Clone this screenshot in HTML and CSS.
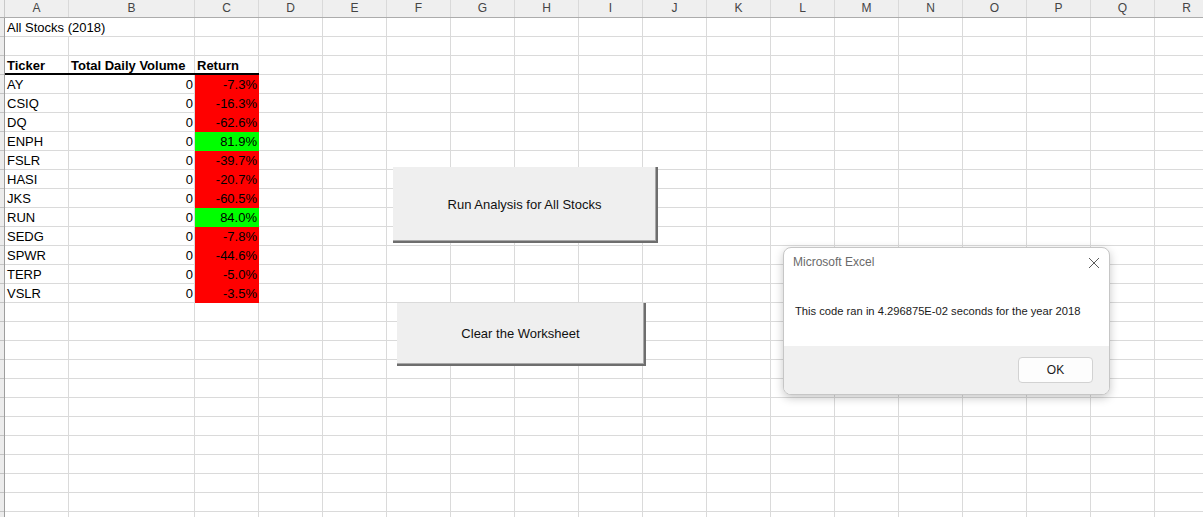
FILE: index.html
```html
<!DOCTYPE html>
<html>
<head>
<meta charset="utf-8">
<title>All Stocks (2018)</title>
<link rel="stylesheet" href="styles.css">
</head>
<body>
<div class="sheet">
  <div class="colheads">
    <div class="corner"></div>
    <div class="ch">A</div>
    <div class="ch ch-wide">B</div>
    <div class="ch">C</div>
    <div class="ch">D</div>
    <div class="ch">E</div>
    <div class="ch">F</div>
    <div class="ch">G</div>
    <div class="ch">H</div>
    <div class="ch">I</div>
    <div class="ch">J</div>
    <div class="ch">K</div>
    <div class="ch">L</div>
    <div class="ch">M</div>
    <div class="ch">N</div>
    <div class="ch">O</div>
    <div class="ch">P</div>
    <div class="ch">Q</div>
    <div class="ch">R</div>
  </div>
  <div class="body">
    <div class="rowheads"></div>
    <div class="grid">
      <div class="cells">
        <div class="c title">All Stocks (2018)</div>
        <div class="c blank"></div>
        <div class="c hdr">Ticker</div>
        <div class="c hdr">Total Daily Volume</div>
        <div class="c hdr">Return</div>

        <div class="c">AY</div><div class="c num">0</div><div class="c num neg">-7.3%</div>
        <div class="c">CSIQ</div><div class="c num">0</div><div class="c num neg">-16.3%</div>
        <div class="c">DQ</div><div class="c num">0</div><div class="c num neg">-62.6%</div>
        <div class="c">ENPH</div><div class="c num">0</div><div class="c num pos">81.9%</div>
        <div class="c">FSLR</div><div class="c num">0</div><div class="c num neg">-39.7%</div>
        <div class="c">HASI</div><div class="c num">0</div><div class="c num neg">-20.7%</div>
        <div class="c">JKS</div><div class="c num">0</div><div class="c num neg">-60.5%</div>
        <div class="c">RUN</div><div class="c num">0</div><div class="c num pos">84.0%</div>
        <div class="c">SEDG</div><div class="c num">0</div><div class="c num neg">-7.8%</div>
        <div class="c">SPWR</div><div class="c num">0</div><div class="c num neg">-44.6%</div>
        <div class="c">TERP</div><div class="c num">0</div><div class="c num neg">-5.0%</div>
        <div class="c">VSLR</div><div class="c num">0</div><div class="c num neg">-3.5%</div>
      </div>
    </div>
  </div>

  <div class="btn btn-run">Run Analysis for All Stocks</div>
  <div class="btn btn-clear">Clear the Worksheet</div>

  <div class="dialog">
    <div class="dlg-head">
      <span class="dlg-title">Microsoft Excel</span>
      <svg class="dlg-close" width="12" height="12" viewBox="0 0 12 12"><path d="M1 1 L11 11 M11 1 L1 11" stroke="#5c5c5c" stroke-width="1" fill="none"/></svg>
    </div>
    <div class="dlg-msg">This code ran in 4.296875E-02 seconds for the year 2018</div>
    <div class="dlg-foot">
      <div class="dlg-ok">OK</div>
    </div>
  </div>
</div>
</body>
</html>
```
FILE: styles.css
```css
* { box-sizing: border-box; }
html, body { margin: 0; padding: 0; }
body {
  width: 1203px;
  height: 517px;
  overflow: hidden;
  background: #fff;
  font-family: "Liberation Sans", Arial, sans-serif;
}
.sheet {
  position: relative;
  width: 1203px;
  height: 517px;
  overflow: hidden;
}
.colheads {
  display: flex;
  height: 18px;
  background: #efefef;
  border-bottom: 1px solid #acacac;
}
.corner {
  flex: none;
  width: 5px;
  border-right: 1px solid #c9c9c9;
}
.ch {
  flex: none;
  width: 64px;
  border-right: 1px solid #d9d9d9;
  text-align: center;
  font-size: 12px;
  line-height: 17px;
  color: #444;
}
.ch-wide { width: 126px; }
.body {
  display: flex;
  height: 499px;
}
.rowheads {
  flex: none;
  width: 5px;
  background: repeating-linear-gradient(to bottom, #ececec 0 18px, #c4c4c4 18px 19px);
  border-right: 1px solid #9e9e9e;
}
.grid {
  flex: none;
  width: 1213px;
  height: 100%;
  background-image:
    linear-gradient(#dadada, #dadada),
    linear-gradient(#dadada, #dadada),
    repeating-linear-gradient(to right, transparent 0 63px, #dadada 63px 64px),
    repeating-linear-gradient(to bottom, transparent 0 18px, #dadada 18px 19px);
  background-size: 1px 100%, 1px 100%, 100% 100%, 100% 100%;
  background-position: 63px 0, 189px 0, 190px 0, 0 0;
  background-repeat: no-repeat;
}
.cells {
  display: grid;
  grid-template-columns: 64px 126px 64px;
  grid-auto-rows: 19px;
  width: 254px;
}
.c {
  font-size: 13px;
  line-height: 20px;
  padding: 0 2px;
  white-space: nowrap;
  overflow: hidden;
  color: #000;
}
.title {
  grid-column: span 2;
  overflow: visible;
  background: #fff;
  border-right: 1px solid #dadada;
  border-bottom: 1px solid #dadada;
}
.blank { grid-column: 1 / span 3; }
.hdr {
  font-weight: bold;
  border-bottom: 2px solid #000;
}
.num { text-align: right; }
.neg { background: #ff0000; }
.pos { background: #00ff00; }

.btn {
  position: absolute;
  display: flex;
  align-items: center;
  justify-content: center;
  background: #efefef;
  border-right: 2px solid #6e6e6e;
  border-bottom: 2px solid #6e6e6e;
  box-shadow: inset -1px -1px 0 #a8a8a8;
  font-size: 13px;
  color: #111;
}
.btn-run { left: 393px; top: 167px; width: 265px; height: 76px; }
.btn-clear { left: 397px; top: 303px; width: 249px; height: 63px; }

.dialog {
  position: absolute;
  left: 783px;
  top: 247px;
  width: 327px;
  height: 148px;
  display: flex;
  flex-direction: column;
  background: #fff;
  border: 1px solid #c6c6c6;
  border-radius: 8px;
  overflow: hidden;
  box-shadow: 0 3px 10px rgba(0, 0, 0, 0.22);
}
.dlg-head {
  flex: none;
  height: 30px;
  display: flex;
  justify-content: space-between;
  align-items: flex-start;
  padding: 6px 9px 0 9px;
}
.dlg-title {
  font-size: 12px;
  line-height: 16px;
  color: #6a6a6a;
}
.dlg-close { margin-top: 3px; }
.dlg-msg {
  flex: 1;
  padding: 25px 0 0 11px;
  font-size: 11.2px;
  line-height: 16px;
  color: #1a1a1a;
}
.dlg-foot {
  flex: none;
  height: 48px;
  background: #f0f0f0;
  display: flex;
  justify-content: flex-end;
  align-items: flex-start;
  padding: 11px 16px 0 0;
}
.dlg-ok {
  width: 75px;
  height: 26px;
  border: 1px solid #d2d2d2;
  border-radius: 4px;
  background: #fdfdfd;
  font-size: 12px;
  line-height: 24px;
  text-align: center;
  color: #1a1a1a;
}
```
